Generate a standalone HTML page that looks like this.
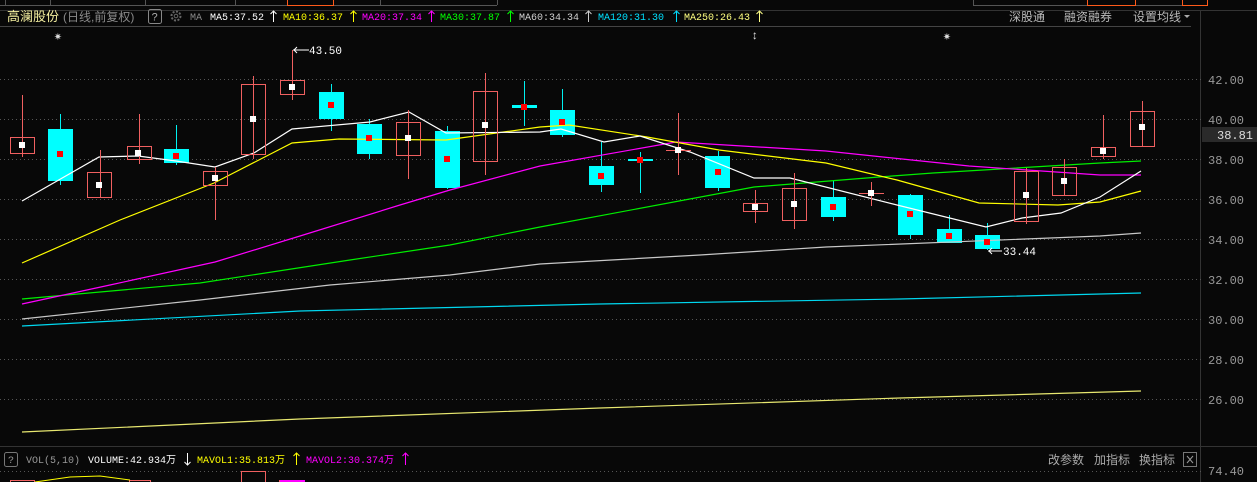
<!DOCTYPE html>
<html><head><meta charset="utf-8"><style>
html,body{margin:0;padding:0;background:#080808;width:1257px;height:482px;overflow:hidden}
svg{display:block}
text{font-family:"Liberation Mono","Noto Sans CJK SC",monospace}
.cn{font-family:"Liberation Sans","Noto Sans CJK SC",sans-serif}
</style></head><body>
<svg width="1257" height="482" viewBox="0 0 1257 482" xmlns="http://www.w3.org/2000/svg">
<rect width="1257" height="482" fill="#080808"/>
<g stroke="#555" fill="none" stroke-width="1">
<line x1="0" y1="5.5" x2="497" y2="5.5"/>
<line x1="973" y1="5.5" x2="1207" y2="5.5"/>
<line x1="5.5" y1="0" x2="5.5" y2="5"/><line x1="50.5" y1="0" x2="50.5" y2="5"/><line x1="145.5" y1="0" x2="145.5" y2="5"/><line x1="235.5" y1="0" x2="235.5" y2="5"/><line x1="380.5" y1="0" x2="380.5" y2="5"/><line x1="497.5" y1="0" x2="497.5" y2="5"/>
<line x1="973.5" y1="0" x2="973.5" y2="5"/><line x1="1207.5" y1="0" x2="1207.5" y2="5"/>
<line x1="0" y1="10.5" x2="1257" y2="10.5" stroke="#333"/>
</g>
<g stroke="#ff5a1a" fill="none"><path d="M287.5 0V5.5H333.5V0"/><path d="M1087.5 0V5.5H1135.5V0"/><path d="M1182.5 0V5.5H1207.5V0"/></g>
<text x="7" y="21" class="cn" font-size="13" fill="#f5f0a0">高澜股份</text>
<text x="63" y="21" class="cn" font-size="12" fill="#8a8a8a">(日线,前复权)</text>
<rect x="148.5" y="9.5" width="13" height="14" rx="2" fill="none" stroke="#888"/>
<text x="151.5" y="20.5" font-size="11" fill="#aaa">?</text>
<circle cx="176" cy="16" r="4.5" fill="none" stroke="#666" stroke-width="2" stroke-dasharray="2 1.5"/><circle cx="176" cy="16" r="1.8" fill="none" stroke="#666"/>
<text x="190" y="20" font-size="10" fill="#888">MA</text>
<g font-size="10">
<text x="210" y="20" fill="#ffffff">MA5:37.52</text>
<text x="283" y="20" fill="#ffff00">MA10:36.37</text>
<text x="362" y="20" fill="#ff00ff">MA20:37.34</text>
<text x="440" y="20" fill="#00ff00">MA30:37.87</text>
<text x="519" y="20" fill="#d0d0d0">MA60:34.34</text>
<text x="598" y="20" fill="#00e0ff">MA120:31.30</text>
<text x="684" y="20" fill="#ffff80">MA250:26.43</text>
</g>
<g fill="none" stroke-width="1">
<path d="M273.5 22V11M270.5 14L273.5 11L276.5 14" stroke="#fff"/>
<path d="M353.5 22V11M350.5 14L353.5 11L356.5 14" stroke="#ff0"/>
<path d="M431.5 22V11M428.5 14L431.5 11L434.5 14" stroke="#f0f"/>
<path d="M510.5 22V11M507.5 14L510.5 11L513.5 14" stroke="#0f0"/>
<path d="M588.5 22V11M585.5 14L588.5 11L591.5 14" stroke="#ccc"/>
<path d="M676.5 22V11M673.5 14L676.5 11L679.5 14" stroke="#0df"/>
<path d="M759.5 22V11M756.5 14L759.5 11L762.5 14" stroke="#ff8"/>
</g>
<g class="cn" font-size="12" fill="#b8b8b8">
<text x="1009" y="21" class="cn">深股通</text>
<text x="1064" y="21" class="cn">融资融券</text>
<text x="1133" y="21" class="cn">设置均线</text>
</g>
<path d="M1184 15h6l-3 3z" fill="#aaa"/>
<line x1="0" y1="26.5" x2="1191" y2="26.5" stroke="#444"/>
<text x="54" y="40" font-size="13" fill="#ddd">✷</text>
<text x="751" y="39" font-size="12" fill="#ddd">↕</text>
<text x="943" y="40" font-size="13" fill="#ddd">✷</text>
<line x1="1200.5" y1="11" x2="1200.5" y2="482" stroke="#333"/>
<line x1="0" y1="446.5" x2="1257" y2="446.5" stroke="#333"/>
<g stroke="#555" stroke-dasharray="1 3">
<line x1="0" y1="79.5" x2="1203" y2="79.5"/><line x1="0" y1="119.5" x2="1203" y2="119.5"/><line x1="0" y1="159.5" x2="1203" y2="159.5"/><line x1="0" y1="199.5" x2="1203" y2="199.5"/><line x1="0" y1="239.5" x2="1203" y2="239.5"/><line x1="0" y1="279.5" x2="1203" y2="279.5"/><line x1="0" y1="319.5" x2="1203" y2="319.5"/><line x1="0" y1="359.5" x2="1203" y2="359.5"/><line x1="0" y1="399.5" x2="1203" y2="399.5"/>
<line x1="0" y1="471.5" x2="1203" y2="471.5"/>
</g>
<g font-size="12" fill="#999">
<text x="1208" y="84">42.00</text><text x="1208" y="124">40.00</text><text x="1208" y="164">38.00</text><text x="1208" y="204">36.00</text><text x="1208" y="244">34.00</text><text x="1208" y="284">32.00</text><text x="1208" y="324">30.00</text><text x="1208" y="364">28.00</text><text x="1208" y="404">26.00</text><text x="1208" y="475">74.40</text>
</g>
<rect x="1202" y="127" width="55" height="15" fill="#2a2a2a"/>
<text x="1217" y="139" font-size="12" fill="#ddd">38.81</text>
<!-- candles -->
<g stroke-width="1">
<g stroke="#00f0f0" fill="#00ffff">
<line x1="60.5" y1="114" x2="60.5" y2="185"/><rect x="48" y="129" width="25" height="52" stroke="none"/>
<line x1="176.5" y1="125" x2="176.5" y2="165"/><rect x="164" y="149" width="25" height="14" stroke="none"/>
<line x1="331.5" y1="84" x2="331.5" y2="131"/><rect x="319" y="92" width="25" height="27" stroke="none"/>
<line x1="369.5" y1="119" x2="369.5" y2="159"/><rect x="357" y="124" width="25" height="30" stroke="none"/>
<line x1="447.5" y1="126" x2="447.5" y2="189"/><rect x="435" y="131" width="25" height="57" stroke="none"/>
<line x1="524.5" y1="81" x2="524.5" y2="126"/><rect x="512" y="105" width="25" height="3" stroke="none"/>
<line x1="562.5" y1="89" x2="562.5" y2="137"/><rect x="550" y="110" width="25" height="25" stroke="none"/>
<line x1="601.5" y1="142" x2="601.5" y2="192"/><rect x="589" y="166" width="25" height="19" stroke="none"/>
<line x1="640.5" y1="152" x2="640.5" y2="193"/><rect x="628" y="159" width="25" height="2" stroke="none"/>
<line x1="718.5" y1="151" x2="718.5" y2="191"/><rect x="705" y="156" width="25" height="32" stroke="none"/>
<line x1="833.5" y1="180" x2="833.5" y2="221"/><rect x="821" y="197" width="25" height="20" stroke="none"/>
<line x1="910.5" y1="194" x2="910.5" y2="239"/><rect x="898" y="195" width="25" height="40" stroke="none"/>
<line x1="949.5" y1="215" x2="949.5" y2="243"/><rect x="937" y="229" width="25" height="14" stroke="none"/>
<line x1="987.5" y1="223" x2="987.5" y2="250"/><rect x="975" y="235" width="25" height="14" stroke="none"/>
</g>
</g>
<!-- MA lines -->
<g fill="none" stroke-width="1.2">
<polyline stroke="#e8e870" points="22,432 300,419 600,408 900,398 1141,391"/>
<polyline stroke="#00d8f0" points="22,326 300,311 600,304 900,299 1141,293"/>
<polyline stroke="#c8c8c8" points="22,319 200,300 330,285 450,275 540,264 700,255 826,247 1100,236 1141,233"/>
<polyline stroke="#00ee00" points="22,299 200,283 350,260 450,245 540,227 754,187 879,177 933,173 1100,163 1141,161"/>
<polyline stroke="#ff00ff" points="22,304 110,285 215,262 300,236 400,205 450,190 540,166 676,142 826,151 969,166 1100,175 1141,175"/>
<polyline stroke="#ffff00" points="22,263 120,220 214,183 292,143 339,139 446,140 540,127 569,125 647,137 719,150 826,163 897,180 979,203 1058,205 1100,202 1141,191"/>
<polyline stroke="#ffffff" points="22,201 99,157 138,156 176,161 215,167 254,153 292,129 370,122 409,112 446,133 540,132 561,129 604,142 640,136 690,152 754,178 790,178 897,205 986,227 1022,218 1061,213 1100,197 1141,171"/>
</g>
<g stroke="#f06060" fill="none">
<line x1="22.5" y1="95" x2="22.5" y2="157"/><rect x="10.5" y="137.5" width="24" height="16"/>
<line x1="100.5" y1="150" x2="100.5" y2="197"/><rect x="87.5" y="172.5" width="24" height="25"/>
<line x1="139.5" y1="114" x2="139.5" y2="164"/><rect x="127.5" y="146.5" width="24" height="13"/>
<line x1="215.5" y1="167" x2="215.5" y2="220"/><rect x="203.5" y="171.5" width="24" height="14"/>
<line x1="253.5" y1="76" x2="253.5" y2="159"/><rect x="241.5" y="84.5" width="24" height="70"/>
<line x1="292.5" y1="50" x2="292.5" y2="100"/><rect x="280.5" y="80.5" width="24" height="14"/>
<line x1="408.5" y1="110" x2="408.5" y2="179"/><rect x="396.5" y="122.5" width="24" height="33"/>
<line x1="485.5" y1="73" x2="485.5" y2="175"/><rect x="473.5" y="91.5" width="24" height="70"/>
<line x1="678.5" y1="113" x2="678.5" y2="175"/><line x1="666" y1="150.5" x2="691" y2="150.5"/>
<line x1="755.5" y1="190" x2="755.5" y2="223"/><rect x="743.5" y="203.5" width="24" height="8"/>
<line x1="794.5" y1="173" x2="794.5" y2="229"/><rect x="782.5" y="188.5" width="24" height="32"/>
<line x1="871.5" y1="182" x2="871.5" y2="206"/><line x1="859" y1="193.5" x2="884" y2="193.5"/>
<line x1="1026.5" y1="168" x2="1026.5" y2="224"/><rect x="1014.5" y="171.5" width="24" height="50"/>
<line x1="1064.5" y1="159" x2="1064.5" y2="195"/><rect x="1052.5" y="167.5" width="24" height="28"/>
<line x1="1103.5" y1="115" x2="1103.5" y2="159"/><rect x="1091.5" y="147.5" width="24" height="9"/>
<line x1="1142.5" y1="101" x2="1142.5" y2="146"/><rect x="1130.5" y="111.5" width="24" height="35"/>
</g>
<g fill="#ff0000">
<rect x="57" y="151" width="6" height="6"/><rect x="173" y="153" width="6" height="6"/><rect x="328" y="102" width="6" height="6"/><rect x="366" y="135" width="6" height="6"/><rect x="444" y="156" width="6" height="6"/><rect x="521" y="104" width="6" height="6"/><rect x="559" y="119" width="6" height="6"/><rect x="598" y="173" width="6" height="6"/><rect x="637" y="157" width="6" height="6"/><rect x="715" y="169" width="6" height="6"/><rect x="830" y="204" width="6" height="6"/><rect x="907" y="211" width="6" height="6"/><rect x="946" y="233" width="6" height="6"/><rect x="984" y="239" width="6" height="6"/>
</g>
<g fill="#ffffff">
<rect x="19" y="142" width="6" height="6"/><rect x="96" y="182" width="6" height="6"/><rect x="135" y="150" width="6" height="6"/><rect x="212" y="175" width="6" height="6"/><rect x="250" y="116" width="6" height="6"/><rect x="289" y="84" width="6" height="6"/><rect x="405" y="135" width="6" height="6"/><rect x="482" y="122" width="6" height="6"/><rect x="675" y="147" width="6" height="6"/><rect x="752" y="204" width="6" height="6"/><rect x="791" y="201" width="6" height="6"/><rect x="868" y="190" width="6" height="6"/><rect x="1023" y="192" width="6" height="6"/><rect x="1061" y="178" width="6" height="6"/><rect x="1100" y="148" width="6" height="6"/><rect x="1139" y="124" width="6" height="6"/>
</g>
<path d="M293 50H309M297 47L294 50L297 53" stroke="#fff" fill="none"/>
<text x="309" y="54" font-size="11" fill="#fff">43.50</text>
<path d="M988 251H1002M992 248L989 251L992 254" stroke="#fff" fill="none"/>
<text x="1003" y="255" font-size="11" fill="#fff">33.44</text>
<rect x="4.5" y="452.5" width="13" height="14" rx="2" fill="none" stroke="#777"/>
<text x="8" y="463" font-size="10" fill="#999">?</text>
<g font-size="10">
<text x="26" y="463" fill="#999">VOL(5,10)</text>
<text x="88" y="463" fill="#fff">VOLUME:42.934万</text>
<text x="197" y="463" fill="#ffff00">MAVOL1:35.813万</text>
<text x="306" y="463" fill="#ff00ff">MAVOL2:30.374万</text>
</g>
<path d="M187.5 453V465M184.5 462L187.5 465L190.5 462" stroke="#fff" fill="none"/>
<path d="M296.5 465V453M293.5 456L296.5 453L299.5 456" stroke="#ff0" fill="none"/>
<path d="M405.5 465V453M402.5 456L405.5 453L408.5 456" stroke="#f0f" fill="none"/>
<g font-size="12" fill="#aaa" class="cn">
<text x="1048" y="464" class="cn">改参数</text><text x="1094" y="464" class="cn">加指标</text><text x="1139" y="464" class="cn">换指标</text>
</g>
<rect x="1183.5" y="452.5" width="13" height="14" fill="none" stroke="#777"/>
<path d="M1187 456l6 7M1193 456l-6 7" stroke="#999"/>
<g stroke="#f06060" fill="none">
<rect x="10.5" y="480.5" width="24" height="4"/><rect x="129.5" y="480.5" width="21" height="4"/><rect x="241.5" y="471.5" width="24" height="14"/><rect x="279.5" y="480.5" width="25" height="4"/>
</g>
<rect x="280" y="480" width="25" height="3" fill="#ff00ff"/>
<polyline points="35,482 70,477 100,476 130,480" fill="none" stroke="#ffff00"/>
</svg>
</body></html>
